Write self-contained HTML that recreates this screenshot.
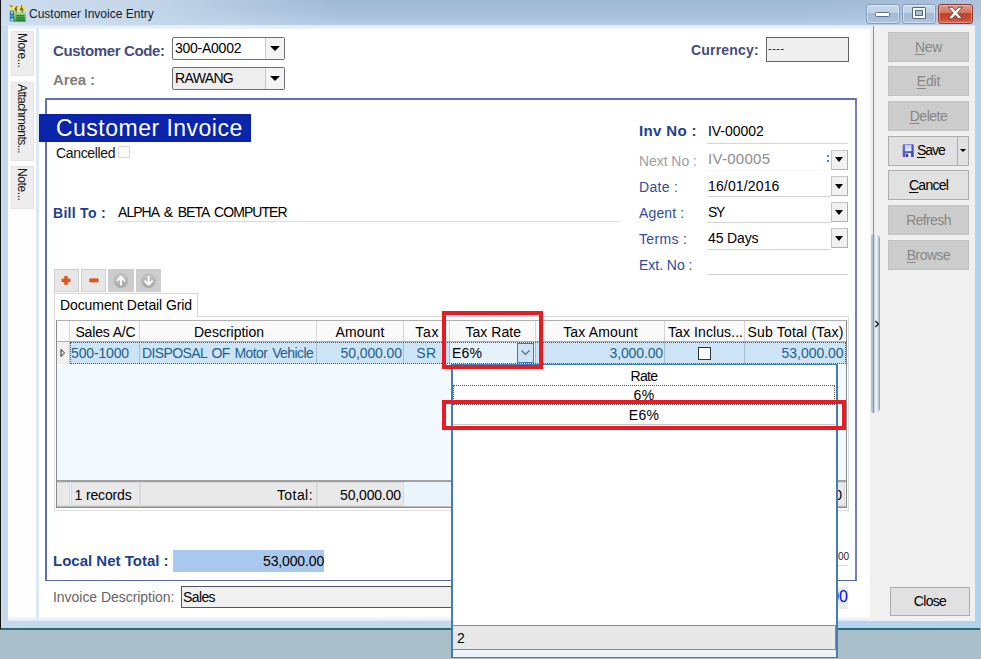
<!DOCTYPE html>
<html>
<head>
<meta charset="utf-8">
<title>Customer Invoice Entry</title>
<style>
html,body{margin:0;padding:0;}
body{width:981px;height:659px;overflow:hidden;position:relative;background:#a9bfc9;font-family:"Liberation Sans",sans-serif;font-size:14px;color:#000;}
.a{position:absolute;white-space:nowrap;line-height:1;}
.b{font-weight:bold;}
/* window */
#frame{left:0;top:0;width:981px;height:628px;background:linear-gradient(90deg,#c7d9ec 0%,#c4d8ec 50%,#b3d5f0 88%,#b0d4f0 100%);}
#titlebar{left:0;top:0;width:981px;height:26px;background:linear-gradient(90deg,rgba(206,222,238,0.95) 0px,rgba(206,222,238,0.8) 130px,rgba(206,222,238,0) 340px,rgba(206,222,238,0) 800px,rgba(206,222,238,0.25) 981px),linear-gradient(#9eb8d4 0%,#a7bfdb 50%,#b6cde7 100%);}
#topfade{left:8px;top:25px;width:967px;height:5px;background:linear-gradient(#cfe2f3 0%,#eaf4fc 25%,#dfecf8 45%,#ffffff 100%);}
#leftedge{left:0;top:0;width:1.4px;height:629px;background:#141414;}
#bottomedge{left:0;top:628px;width:980px;height:2px;background:#2b6a78;}
#client{left:8px;top:26px;width:967px;height:595px;background:#fff;}
#lstrip{left:8px;top:26px;width:29px;height:595px;background:#fefefe;}
#lsep{left:36px;top:28px;width:2.5px;height:593px;background:#dde9f6;}
.vtab{background:#ededed;border:1px solid #e4e4e4;left:11px;width:23px;box-sizing:border-box;}
.vtab span{position:absolute;left:3px;top:0.5px;writing-mode:vertical-rl;font-size:12px;line-height:14px;white-space:nowrap;color:#111;letter-spacing:-0.4px;}
#v2{letter-spacing:-0.55px;}
#rpanel{left:870px;top:26px;width:105px;height:595px;background:#f0f0f0;}
.btn{left:888px;width:81px;height:30px;box-sizing:border-box;border:1px solid #adadad;background:#e1e1e1;text-align:center;font-size:14px;line-height:28px;color:#000;}
.btn.dis{background:#cccccc;border-color:#c2c2c2;color:#868686;}
.btn u{text-decoration-thickness:1px;text-underline-offset:2px;}
/* form */
.lbl{font-size:14px;color:#2f4c9a;}
.val{font-size:14px;color:#000;}
.uline{height:1px;background:#d4d4d4;}
.dd{width:17px;height:20px;box-sizing:border-box;border:1px solid #c6c6c6;border-right-color:#b0b0b0;border-bottom-color:#b0b0b0;background:#f1f1f1;}
.dd:after{content:"";position:absolute;left:2.8px;top:6.7px;border-left:4.7px solid transparent;border-right:4.7px solid transparent;border-top:5.3px solid #000;}
.combo{box-sizing:border-box;border:1px solid #6e6e7a;border-radius:2px;background:#fff;}
.combo .arr{position:absolute;right:0;top:0;bottom:0;width:18px;border-left:1px solid #c8c8c8;background:#f4f4f4;}
.combo .arr:after{content:"";position:absolute;left:4px;top:8px;border-left:5px solid transparent;border-right:5px solid transparent;border-top:5px solid #000;}
/* grid */
.gh{top:321px;height:21px;font-size:14px;text-align:center;line-height:23px;overflow:hidden;color:#000;background:#fafafa;border-right:1px solid #d6d6d6;box-sizing:border-box;}
.gc{top:342px;height:22px;font-size:14px;line-height:22px;overflow:hidden;color:#1f5f8b;background:#cce4f6;border-right:1px solid #a9bdd0;box-sizing:border-box;}
.gf{top:482px;height:24px;font-size:14px;line-height:25px;overflow:hidden;color:#000;background:#e9e9e9;border:1px solid #d9d9d9;box-sizing:border-box;}
.red{border:4.2px solid #e81a22;box-sizing:border-box;}
/*FIT*/
#ttl{letter-spacing:0.000px;}
#t_cc{letter-spacing:-0.363px;}
#t_area{letter-spacing:-0.089px;}
#t_code{letter-spacing:-0.257px;}
#t_raw{letter-spacing:-0.644px;}
#t_cur{letter-spacing:0.184px;}
#t_ci{letter-spacing:0.484px;}
#t_can{letter-spacing:-0.341px;}
#t_bill{letter-spacing:0.289px;}
#t_alpha{letter-spacing:-0.949px;}
#t_inv{letter-spacing:0.348px;}
#t_ivn{letter-spacing:-0.045px;}
#t_next{letter-spacing:-0.062px;}
#t_nxn{letter-spacing:0.280px;}
#t_date{letter-spacing:0.291px;}
#t_dtv{letter-spacing:0.142px;}
#t_agent{letter-spacing:0.146px;}
#t_sy{letter-spacing:-1.344px;}
#t_terms{letter-spacing:0.342px;}
#t_45{letter-spacing:-0.123px;}
#t_ext{letter-spacing:-0.032px;}
#h1{letter-spacing:-0.143px;}
#h2{letter-spacing:0.000px;}
#h3{letter-spacing:0.157px;}
#h4{letter-spacing:0.667px;}
#h5{letter-spacing:0.031px;}
#h6{letter-spacing:0.144px;}
#h7{letter-spacing:0.090px;}
#h8{letter-spacing:0.205px;}
#c1{letter-spacing:-0.146px;}
#c2{letter-spacing:-0.598px;}
#c3{letter-spacing:-0.087px;}
#c4{letter-spacing:0.623px;}
#c5{letter-spacing:0.172px;}
#c6{letter-spacing:-0.125px;}
#c8{letter-spacing:-0.044px;}
#f1{letter-spacing:-0.141px;}
#f2{letter-spacing:0.437px;}
#f3{letter-spacing:-0.144px;}
#p_rate{letter-spacing:-0.695px;}
#p_6{letter-spacing:0.383px;}
#p_e6{letter-spacing:0.240px;}
#p_2{letter-spacing:-0.297px;}
#t_lnt{letter-spacing:0.000px;}
#t_53{letter-spacing:-0.133px;}
#t_idesc{letter-spacing:-0.039px;}
#t_sales{letter-spacing:-0.606px;}
#b_new{letter-spacing:-0.309px;}
#b_edit{letter-spacing:-0.109px;}
#b_del{letter-spacing:-0.481px;}
#b_save{letter-spacing:-1.007px;}
#b_cancel{letter-spacing:-0.766px;}
#b_refresh{letter-spacing:-0.619px;}
#b_browse{letter-spacing:-0.517px;}
#b_close{letter-spacing:-0.659px;}
#t_tab{letter-spacing:-0.092px;}
/*ENDFIT*/
</style>
</head>
<body>
<div class="a" id="frame"></div>
<div class="a" id="titlebar"></div>
<div class="a" style="left:0;top:26px;width:8px;height:602px;background:#c7d9ec;"></div>
<div class="a" id="client"></div>
<div class="a" id="lstrip"></div>
<div class="a" id="topfade"></div>
<div class="a" style="left:8px;top:616px;width:862px;height:5px;background:linear-gradient(#ffffff,#dfe9f4);"></div>
<div class="a" id="lsep"></div>
<div class="a" id="rpanel"></div>
<div class="a" id="bottomedge"></div>
<div class="a" id="leftedge"></div>


<!-- HEADER FIELDS -->
<div class="a b" id="t_cc" style="left:53px;top:43px;font-size:15px;color:#434c7c;">Customer Code:</div>
<div class="a b" id="t_area" style="left:53px;top:72px;font-size:15px;color:#808080;">Area :</div>
<div class="a combo" style="left:172px;top:37px;width:113px;height:23px;"><div class="arr"></div></div>
<div class="a val" id="t_code" style="left:175px;top:41px;">300-A0002</div>
<div class="a combo" style="left:172px;top:67px;width:113px;height:23px;background:#eeeeee;"><div class="arr"></div></div>
<div class="a val" id="t_raw" style="left:175px;top:71px;">RAWANG</div>
<div class="a b" id="t_cur" style="left:691px;top:43px;font-size:14px;color:#434c7c;">Currency:</div>
<div class="a" style="left:766px;top:37px;width:83px;height:25px;box-sizing:border-box;border:1px solid #62626e;background:#efefef;"></div>
<div class="a" style="left:768px;top:43px;font-size:11px;letter-spacing:0.5px;color:#222;">----</div>

<!-- BLUE BOX -->
<div class="a" style="left:45px;top:98px;width:812px;height:483px;box-sizing:border-box;border:2px solid #6172b1;border-right-color:#7383ba;border-bottom:1.4px solid #5568aa;border-radius:2px 0 0 0;"></div>
<div class="a" style="left:39px;top:114px;width:212px;height:28px;background:#0b24ac;"></div>
<div class="a" id="t_ci" style="left:56px;top:117px;font-size:23px;color:#fff;">Customer Invoice</div>
<div class="a" id="t_can" style="left:56px;top:146px;font-size:14px;color:#111;">Cancelled</div>
<div class="a" style="left:118px;top:146px;width:12px;height:12px;box-sizing:border-box;border:1px solid #d9d9d9;background:#fafafa;"></div>
<div class="a b lbl" id="t_bill" style="left:53px;top:206px;color:#1d3f8f;">Bill To :</div>
<div class="a val" id="t_alpha" style="left:118px;top:205px;word-spacing:2.5px;">ALPHA &amp; BETA COMPUTER</div>
<div class="a uline" style="left:117px;top:221px;width:503px;background:#dcdcdc;"></div>

<!-- RIGHT FIELDS -->
<div class="a b lbl" id="t_inv" style="left:639px;top:123px;color:#1d3f8f;font-size:15px;">Inv No :</div>
<div class="a val" id="t_ivn" style="left:708px;top:124px;">IV-00002</div>
<div class="a uline" style="left:707px;top:143px;width:141px;"></div>
<div class="a lbl" id="t_next" style="left:639px;top:154px;color:#a0a0a0;">Next No :</div>
<div class="a val" id="t_nxn" style="left:708px;top:151px;color:#8e8e8e;font-size:15px;">IV-00005</div>
<div class="a" style="left:827px;top:155px;width:2px;height:2px;background:#4a7fd0;"></div>
<div class="a" style="left:827px;top:160px;width:2px;height:2px;background:#4a7fd0;"></div>
<div class="a dd" style="left:831px;top:149.6px;"></div>
<div class="a uline" style="left:707px;top:170px;width:124px;background:#f6f6f6;"></div>
<div class="a lbl" id="t_date" style="left:639px;top:180px;">Date :</div>
<div class="a val" id="t_dtv" style="left:708px;top:179px;">16/01/2016</div>
<div class="a dd" style="left:831px;top:176px;"></div>
<div class="a uline" style="left:707px;top:196px;width:124px;"></div>
<div class="a lbl" id="t_agent" style="left:639px;top:206px;">Agent :</div>
<div class="a val" id="t_sy" style="left:708px;top:205px;">SY</div>
<div class="a dd" style="left:831px;top:202px;"></div>
<div class="a uline" style="left:707px;top:222px;width:124px;"></div>
<div class="a lbl" id="t_terms" style="left:639px;top:232px;">Terms :</div>
<div class="a val" id="t_45" style="left:708px;top:231px;">45 Days</div>
<div class="a dd" style="left:831px;top:228px;"></div>
<div class="a uline" style="left:707px;top:249px;width:124px;"></div>
<div class="a lbl" id="t_ext" style="left:639px;top:258px;">Ext. No :</div>
<div class="a uline" style="left:707px;top:274px;width:141px;"></div>

<!-- GRID TOOLBAR -->
<div class="a" style="left:54px;top:269px;width:25px;height:23px;box-sizing:border-box;border:1px solid #d0d0d0;background:#e7e7e7;"></div>
<div class="a" style="left:81px;top:269px;width:25px;height:23px;box-sizing:border-box;border:1px solid #d0d0d0;background:#e7e7e7;"></div>
<div class="a" style="left:108px;top:269px;width:25.6px;height:23px;background:#cdcdcd;"></div>
<div class="a" style="left:135.6px;top:269px;width:25.4px;height:23px;background:#cdcdcd;"></div>
<svg class="a" style="left:54px;top:269px" width="110" height="23" viewBox="0 0 110 23">
  <defs><linearGradient id="cg" x1="0" y1="0" x2="0" y2="1"><stop offset="0" stop-color="#c9c9c9"/><stop offset="1" stop-color="#a4a4a4"/></linearGradient></defs>
  <path d="M10.5 7.3h3v2.6h2.6v3h-2.6v2.6h-3v-2.6h-2.6v-3h2.6z" fill="#ea5514" stroke="#d9480f" stroke-width="0.5"/>
  <rect x="35.6" y="9.7" width="8.6" height="3.4" rx="0.6" fill="#ea5514" stroke="#d9480f" stroke-width="0.5"/>
  <circle cx="66.9" cy="11.8" r="7" fill="url(#cg)" stroke="#b4b4b4" stroke-width="0.8"/>
  <path d="M66.9 15.8 V8.2 M63.4 11.4 L66.9 7.8 L70.4 11.4" fill="none" stroke="#fbfbfb" stroke-width="2" stroke-linecap="round" stroke-linejoin="round"/>
  <circle cx="94.6" cy="11.8" r="7" fill="url(#cg)" stroke="#b4b4b4" stroke-width="0.8"/>
  <path d="M94.6 7.8 V15.4 M91.1 12.2 L94.6 15.8 L98.1 12.2" fill="none" stroke="#fbfbfb" stroke-width="2" stroke-linecap="round" stroke-linejoin="round"/>
</svg>
<!-- TAB -->
<div class="a" style="left:54px;top:316px;width:795px;height:1px;background:#dadada;"></div>
<div class="a" style="left:53.5px;top:293px;width:144.5px;height:24px;box-sizing:border-box;border:1px solid #d6d6d6;border-bottom:none;background:#fff;"></div>
<div class="a" id="t_tab" style="left:60px;top:298px;font-size:14px;">Document Detail Grid</div>

<!-- GRID -->
<div class="a" style="left:53.5px;top:316px;width:795px;height:194.5px;box-sizing:border-box;border:1px solid #dedede;border-top:none;"></div>
<div class="a" style="left:56px;top:320px;width:791px;height:187.5px;box-sizing:border-box;border:1px solid #8a8a8a;border-top-color:#b0b0b0;background:#f3faff;"></div>
<div class="a gh" style="left:57px;width:13px;"></div>
<div class="a gh" id="h1" style="left:70px;width:70px;padding-left:2px;">Sales A/C</div>
<div class="a gh" id="h2" style="left:140px;width:177px;padding-left:2px;">Description</div>
<div class="a gh" id="h3" style="left:317px;width:87px;">Amount</div>
<div class="a gh" id="h4" style="left:404px;width:46px;padding-left:1.5px;">Tax</div>
<div class="a gh" id="h5" style="left:450px;width:86px;padding-left:1.5px;">Tax Rate</div>
<div class="a gh" id="h6" style="left:536px;width:129px;padding-left:1px;">Tax Amount</div>
<div class="a gh" id="h7" style="left:665px;width:80px;text-align:left;padding-left:3px;">Tax Inclus...</div>
<div class="a gh" id="h8" style="left:745px;width:101px;border-right:none;">Sub Total (Tax)</div>
<div class="a" style="left:57px;top:341px;width:789px;height:1px;background:#b0b0b0;"></div>
<!-- data row -->
<div class="a" style="left:57px;top:342px;width:13px;height:22px;background:#f0f0f0;border-right:1px solid #c8c8c8;box-sizing:border-box;"></div>
<svg class="a" style="left:60px;top:348px" width="6" height="10" viewBox="0 0 6 10"><path d="M1 1.5 L4.6 5 L1 8.5 Z" fill="#fff" stroke="#222" stroke-width="1"/></svg>
<div class="a gc" id="c1" style="left:70px;width:70px;padding-left:1px;">500-1000</div>
<div class="a gc" id="c2" style="left:140px;width:177px;padding-left:2px;word-spacing:1.5px;">DISPOSAL OF Motor Vehicle</div>
<div class="a gc" id="c3" style="left:317px;width:87px;text-align:right;padding-right:1px;">50,000.00</div>
<div class="a gc" id="c4" style="left:404px;width:46px;text-align:center;">SR</div>
<div class="a gc" id="c5" style="left:450px;width:86px;background:#e6f2fb;color:#000;padding-left:2px;">E6%</div>
<div class="a gc" id="c6" style="left:536px;width:129px;text-align:right;padding-right:1px;">3,000.00</div>
<div class="a gc" style="left:665px;width:80px;"></div>
<div class="a gc" id="c8" style="left:745px;width:101px;text-align:right;padding-right:2.5px;border-right:none;">53,000.00</div>
<div class="a" style="left:698px;top:347px;width:13px;height:13px;box-sizing:border-box;border:1px solid #333;background:#fff;"></div>
<div class="a" style="left:70px;top:342px;width:776px;height:22px;box-sizing:border-box;border:1px dotted #555;"></div>
<!-- dropdown btn in cell -->
<div class="a" style="left:517px;top:343px;width:17px;height:20px;box-sizing:border-box;border:1px solid #3c78c0;background:#cde4f7;"></div>
<svg class="a" style="left:520px;top:349px" width="11" height="8" viewBox="0 0 11 8"><path d="M1.5 1.5 L5.5 5.5 L9.5 1.5" fill="none" stroke="#5b6b7b" stroke-width="1.2"/></svg>
<!-- footer -->
<div class="a" style="left:57px;top:480px;width:789px;height:2px;background:#a0a0a0;"></div>
<div class="a" style="left:57px;top:482px;width:789px;height:25px;background:#e9f4fc;"></div>
<div class="a gf" style="left:57px;width:13px;border-left:none;"></div>
<div class="a gf" id="f1" style="left:70.5px;width:69.5px;padding-left:3px;">1 records</div>
<div class="a gf" id="f2" style="left:140px;width:177px;text-align:right;padding-right:3px;">Total:</div>
<div class="a gf" id="f3" style="left:317px;width:87px;text-align:right;padding-right:2px;">50,000.00</div>
<div class="a gf" id="f8" style="left:745px;width:100px;text-align:right;padding-right:2px;">53,000.00</div>
<div class="a" style="left:57px;top:506px;width:789px;height:1px;background:#bdbdbd;"></div>

<!-- BOTTOM -->
<div class="a b" id="t_lnt" style="left:53px;top:553px;font-size:15px;color:#1d3f8f;">Local Net Total :</div>
<div class="a" style="left:173px;top:550px;width:151.3px;height:21.8px;background:#a8c8ee;"></div>
<div class="a val" id="t_53" style="left:263px;top:554px;">53,000.00</div>
<div class="a" id="t_idesc" style="left:53px;top:590px;font-size:14px;color:#666;">Invoice Description:</div>
<div class="a" style="left:181px;top:586px;width:600px;height:22px;box-sizing:border-box;border:1px solid #555;background:#f0f0f0;"></div>
<div class="a val" id="t_sales" style="left:183px;top:590px;">Sales</div>
<div class="a" id="t_s00" style="left:838px;top:552px;font-size:10px;color:#222;">00</div>
<div class="a uline" style="left:740px;top:565px;width:108px;background:#dcdcdc;"></div>
<div class="a" style="left:740px;top:587px;width:108px;height:22px;background:#ebebeb;"></div>
<div class="a b" id="t_b00" style="left:760px;top:589px;font-size:16px;color:#0a0ae6;width:88px;text-align:right;font-weight:normal;">53,000.00</div>

<!-- POPUP -->
<div class="a" style="left:451px;top:364px;width:387px;height:294px;box-sizing:border-box;border:2px solid #467db0;border-top-width:1px;background:#fff;"></div>
<div class="a" id="p_rate" style="left:453px;top:369px;width:382px;text-align:center;font-size:14px;">Rate</div>
<div class="a" style="left:453px;top:385px;width:382px;height:20px;box-sizing:border-box;border:1px dotted #555;"></div>
<div class="a" id="p_6" style="left:453px;top:388px;width:382px;text-align:center;font-size:14px;">6%</div>
<div class="a" id="p_e6" style="left:453px;top:408px;width:382px;text-align:center;font-size:14px;">E6%</div>
<div class="a" style="left:453px;top:424px;width:382px;height:1px;background:#c8c8c8;"></div>
<div class="a" style="left:453px;top:625px;width:383px;height:25px;box-sizing:border-box;border:1px solid #8a8a8a;border-left:none;background:#e8e8e8;"></div>
<div class="a" id="p_2" style="left:457px;top:631px;font-size:14px;">2</div>
<div class="a" style="left:453px;top:650px;width:383px;height:7px;background:#eef3f8;"></div>

<!-- RED BOXES -->
<div class="a red" style="left:441.5px;top:311.4px;width:101.2px;height:57.2px;"></div>
<div class="a red" style="left:442.2px;top:399.6px;width:403.8px;height:30.4px;"></div>
<!-- TITLE BAR -->
<svg class="a" style="left:8.5px;top:5px" width="18" height="18" viewBox="0 0 18 18">
  <defs>
   <linearGradient id="ig" x1="0" y1="0" x2="0" y2="1"><stop offset="0" stop-color="#dff0c4"/><stop offset="0.45" stop-color="#7cc874"/><stop offset="1" stop-color="#2f9e40"/></linearGradient>
   <filter id="ib" x="-10%" y="-10%" width="120%" height="120%"><feGaussianBlur stdDeviation="0.35"/></filter>
  </defs>
  <g filter="url(#ib)">
  <rect x="4.8" y="5" width="12" height="11.8" fill="url(#ig)"/>
  <rect x="0.8" y="0.8" width="16" height="4.8" rx="1" fill="#efe070"/>
  <rect x="1" y="0.6" width="2.5" height="1" fill="#5a5212"/>
  <path d="M5.2 5.2 L6.8 1.8 L8.6 5.2 Z M7.2 1 h1.2 v1.4 h-1.2z" fill="#6b5a14"/>
  <path d="M10.6 5.2 L12.4 1.4 L14.8 5.2 Z M12 0.2 h1.2 v1.4 h-1.2z" fill="#6b5a14"/>
  <path d="M6 5.5 l1.2 3.5 l1 -3.5z M12 5.5 l1.6 3 l0.8 -3z" fill="#4d6a3a" opacity="0.75"/>
  <rect x="7.2" y="10.2" width="8.4" height="1.2" fill="#1d6e2c"/>
  <rect x="7.2" y="12.4" width="8.4" height="1.2" fill="#1d6e2c"/>
  <rect x="7.2" y="14.6" width="8.4" height="1.2" fill="#1d6e2c"/>
  <rect x="0.8" y="5.4" width="4.2" height="11.2" rx="1.6" fill="#2a78ae"/>
  <circle cx="3" cy="7.6" r="1.1" fill="#b8f0fb"/>
  <circle cx="2.6" cy="11" r="0.9" fill="#5fb0e0"/>
  <circle cx="3" cy="14.6" r="1.2" fill="#b8f0fb"/>
  </g>
</svg>
<div class="a" id="ttl" style="left:29px;top:8px;font-size:12px;color:#0c1a33;">Customer Invoice Entry</div>
<!-- window buttons -->
<div class="a" style="left:865.5px;top:3.5px;width:34px;height:20px;box-sizing:border-box;border:1px solid #869dba;border-radius:3px;box-shadow:inset 0 0 0 1px rgba(255,255,255,.45);background:linear-gradient(#c9d9eb 0%,#bccfe5 45%,#a3bbd7 46%,#adc4de 100%);"></div>
<div class="a" style="left:875px;top:12px;width:15px;height:5px;box-sizing:border-box;background:#fff;border:1px solid #5d6f88;border-radius:1.5px;"></div>
<div class="a" style="left:902px;top:3.5px;width:34px;height:20px;box-sizing:border-box;border:1px solid #869dba;border-radius:3px;box-shadow:inset 0 0 0 1px rgba(255,255,255,.45);background:linear-gradient(#c9d9eb 0%,#bccfe5 45%,#a3bbd7 46%,#adc4de 100%);"></div>
<div class="a" style="left:911.5px;top:7px;width:14px;height:12px;box-sizing:border-box;border:1px solid #56677f;border-radius:1px;background:#fff;"></div>
<div class="a" style="left:914.5px;top:10px;width:8px;height:6px;box-sizing:border-box;border:1px solid #56677f;background:#a9c0da;"></div>
<div class="a" style="left:938px;top:3.5px;width:35px;height:20px;box-sizing:border-box;border:1px solid #8a3a30;border-radius:3px;box-shadow:inset 0 0 0 1px rgba(255,255,255,.3);background:linear-gradient(#dd9a8b 0%,#d37560 42%,#c4412b 46%,#c94a33 75%,#d66a50 100%);"></div>
<svg class="a" style="left:947px;top:6px" width="17" height="14" viewBox="0 0 17 14">
  <path d="M1.2 1.2 L5.2 1.2 L8.3 4.6 L11.4 1.2 L15.4 1.2 L10.6 6.9 L15.4 12.8 L11.4 12.8 L8.3 9.2 L5.2 12.8 L1.2 12.8 L6 6.9 Z" fill="#fff" stroke="#6a322c" stroke-width="0.9" stroke-linejoin="round"/>
</svg>

<!-- LEFT TABS -->
<div class="a vtab" style="top:31px;height:45px;"><span id="v1">More...</span></div>
<div class="a vtab" style="top:82px;height:79px;"><span id="v2">Attachments...</span></div>
<div class="a vtab" style="top:166px;height:43px;"><span id="v3">Note...</span></div>

<!-- RIGHT PANEL BUTTONS -->
<div class="a btn dis" id="b_new" style="top:32px;"><u>N</u>ew</div>
<div class="a btn dis" id="b_edit" style="top:66px;"><u>E</u>dit</div>
<div class="a btn dis" id="b_del" style="top:101px;"><u>D</u>elete</div>
<div class="a btn" style="top:136px;width:70px;"></div>
<div class="a btn" style="top:136px;left:958px;width:11px;border-left:none;"></div>
<div class="a" style="left:960px;top:148.5px;border-left:3.2px solid transparent;border-right:3.2px solid transparent;border-top:3.6px solid #000;"></div>
<svg class="a" style="left:902px;top:143.5px" width="12.4" height="13.5" viewBox="0 0 12 14">
  <defs><linearGradient id="sg" x1="0" y1="0" x2="1" y2="1"><stop offset="0" stop-color="#6a72dc"/><stop offset="1" stop-color="#3a40ae"/></linearGradient>
  <linearGradient id="sl" x1="0" y1="0" x2="0" y2="1"><stop offset="0" stop-color="#b9bff2"/><stop offset="1" stop-color="#f2f3fd"/></linearGradient></defs>
  <rect x="0.3" y="0.3" width="11.4" height="13.4" rx="0.8" fill="url(#sg)"/>
  <rect x="2.6" y="0.8" width="6.8" height="6.6" fill="url(#sl)"/>
  <rect x="3.2" y="9.4" width="5.8" height="4.3" fill="#e4e6f6"/>
  <rect x="3.8" y="10.2" width="2.2" height="3.5" fill="#3238a0"/>
</svg>
<div class="a" id="b_save" style="left:917px;top:143px;font-size:14px;"><u style="text-underline-offset:2px">S</u>ave</div>
<div class="a btn" id="b_cancel" style="top:170px;"><u>C</u>ancel</div>
<div class="a btn dis" id="b_refresh" style="top:205px;">Refresh</div>
<div class="a btn dis" id="b_browse" style="top:240px;"><u>B</u>rowse</div>
<div class="a btn" id="b_close" style="top:587px;left:890px;width:80px;height:29px;line-height:27px;">Close</div>
<!-- splitter -->
<div class="a" style="left:873px;top:26px;width:1px;height:208px;background:#8f8f8f;"></div>
<div class="a" style="left:870.5px;top:233.5px;width:9.7px;height:179.5px;border-radius:3px 5px 5px 3px;background:linear-gradient(90deg,#b9cad8 0%,#a9bccb 20%,#8e9398 27%,#cfdde8 40%,#f4faff 60%,#c9d6e1 78%,#8797a5 100%);"></div>
<svg class="a" style="left:873px;top:319px" width="8" height="10" viewBox="0 0 8 10"><path d="M2.4 2 L5.4 5 L2.4 8" fill="none" stroke="#111" stroke-width="1.3"/></svg>
</body>
</html>
